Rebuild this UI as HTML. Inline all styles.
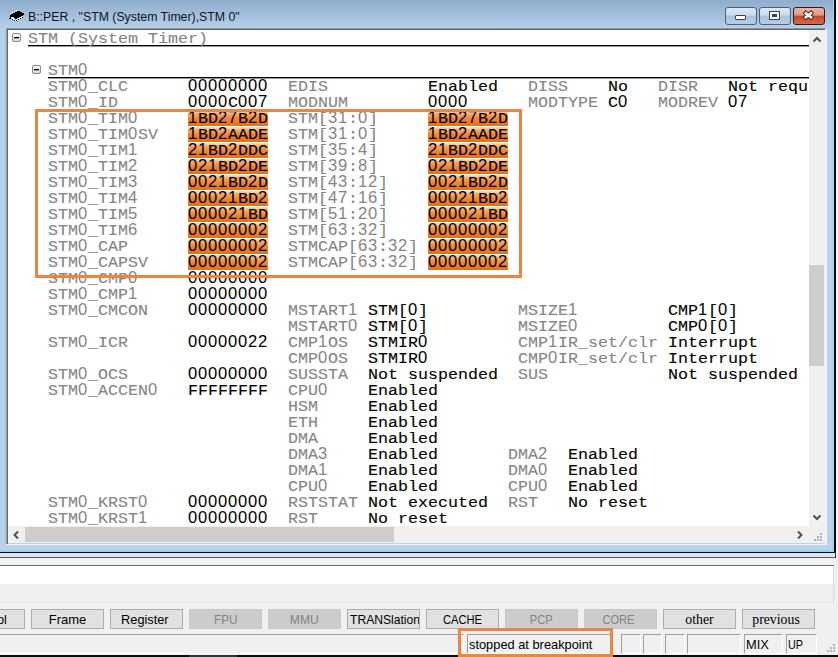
<!DOCTYPE html>
<html><head><meta charset="utf-8">
<style>
*{box-sizing:border-box}
html,body{margin:0;padding:0}
body{width:838px;height:657px;overflow:hidden;position:relative;background:#f7f6f4;font-family:"Liberation Sans",sans-serif}
.a{position:absolute}
#frame{position:absolute;left:0;top:0;width:834px;height:552px;background:#bcd2ea}
#title{position:absolute;left:0;top:0;width:834px;height:29px;background:linear-gradient(#8fadcc,#a7c2de 60%,#b8d1ea)}
#ttxt{position:absolute;left:28px;top:9px;font-size:12.3px;color:#0b1724;white-space:pre;line-height:16px}
#content{position:absolute;left:7px;top:29px;width:802px;height:497px;background:#fff;border-left:1px solid #5f6670;border-top:1px solid #5f6670;overflow:hidden}
#c2{position:absolute;left:-8px;top:-30px;width:838px;height:560px}
.t{position:absolute;font-style:normal;font-family:"Liberation Mono",monospace;font-size:16.664px;line-height:16px;white-space:pre;transform:scaleY(0.874);transform-origin:0 12.43px;-webkit-text-stroke:0.12px currentColor}
.n{color:#858585}
.v{color:#000}
.dg{position:absolute;font-style:normal;font-family:"Liberation Sans",sans-serif;font-size:16.6px;letter-spacing:0.77px;line-height:16px;white-space:pre}
.hb{position:absolute;height:15px;background:linear-gradient(#fcdcbf 0%,#f6a35c 25%,#ef842e 55%,#e0701a 100%)}
.ul{position:absolute;height:1px;background:#000;box-shadow:0 1px 0 #9a9a9a}
.tree{position:absolute;width:9px;height:9px;border:1px solid #8a8a8a;border-radius:2px;background:linear-gradient(#fafafa,#d8d8d8)}
.tree:after{content:"";position:absolute;left:1px;top:3px;width:5px;height:1px;background:#000;box-shadow:0 0.5px 0 #555}
#vsb{position:absolute;left:809px;top:30px;width:16px;height:513px;background:#f0f0f0}
#hsb{position:absolute;left:8px;top:526px;width:801px;height:17px;background:#f0f0f0}
#vthumb{position:absolute;left:809px;top:265px;width:15px;height:101px;background:#cdcdcd}
#hthumb{position:absolute;left:25px;top:527px;width:369px;height:15px;background:#cdcdcd}
.orange{position:absolute;border:3px solid #ea8544}
.btn{position:absolute;top:609px;width:73px;height:20px;border:1px solid #adadad;background:#e1e1e1;font-size:12.8px;line-height:19px;text-align:center;color:#000;white-space:pre;overflow:hidden}
.dis{background:#cccccc;border-color:#c8c8c8;color:#838383}
.ser{font-family:"Liberation Serif",serif;font-size:13.8px}
.cell{position:absolute;top:634px;height:20px;border-left:1px solid #a0a0a0;border-top:1px solid #a0a0a0;border-right:1px solid #fff;border-bottom:1px solid #fff;font-size:12.84px;line-height:19px;white-space:pre;padding-left:1px}
</style></head><body>
<div id="frame"></div>
<div id="title"></div>
<div class="a" style="left:0;top:29px;width:7px;height:516px;background:linear-gradient(to right,#b3cfec 0,#b6cfea 2px,#bcd0e6 4px,#c4d2e0 5px,#9ba7b3 6px,#9ba7b3 7px)"></div>
<!-- chip icon -->
<svg class="a" style="left:0;top:0" width="30" height="28" shape-rendering="crispEdges"><g fill="#fff" opacity="0.85"><rect x="10" y="13" width="1" height="1"/><rect x="12" y="12" width="1" height="1"/><rect x="14" y="11" width="1" height="1"/><rect x="16" y="10" width="1" height="1"/><rect x="11" y="17" width="1" height="1"/><rect x="12" y="17" width="1" height="1"/><rect x="12" y="18" width="1" height="1"/><rect x="13" y="18" width="1" height="1"/><rect x="13" y="19" width="1" height="1"/><rect x="15" y="20" width="1" height="1"/><rect x="17" y="19" width="1" height="1"/><rect x="19" y="18" width="1" height="1"/><rect x="21" y="17" width="1" height="1"/><rect x="14" y="19" width="1" height="1"/><rect x="16" y="19" width="1" height="1"/><rect x="18" y="18" width="1" height="1"/><rect x="20" y="17" width="1" height="1"/><rect x="22" y="16" width="1" height="1"/></g><g fill="#000"><rect x="17" y="11" width="3" height="1"/><rect x="15" y="12" width="7" height="1"/><rect x="13" y="13" width="11" height="1"/><rect x="11" y="14" width="13" height="1"/><rect x="10" y="15" width="13" height="1"/><rect x="10" y="16" width="11" height="1"/><rect x="10" y="17" width="1" height="1"/><rect x="14" y="17" width="5" height="1"/><rect x="9" y="18" width="2" height="1"/><rect x="15" y="18" width="2" height="1"/><rect x="12" y="19" width="1" height="1"/><rect x="14" y="20" width="1" height="1"/><rect x="16" y="20" width="1" height="1"/><rect x="18" y="19" width="1" height="1"/><rect x="20" y="18" width="1" height="1"/><rect x="22" y="17" width="1" height="1"/></g></svg>
<div id="ttxt">B::PER , "STM (System Timer),STM 0"</div>
<!-- window buttons -->
<div class="a" style="left:725px;top:7px;width:32px;height:18px;border:1px solid #4d6078;border-radius:3px;background:linear-gradient(#dce8f4 0%,#c8dbee 45%,#a9c2dc 50%,#b6cde6 100%)"></div>
<div class="a" style="left:735px;top:15px;width:11px;height:5px;border:1px solid #3a4450;border-radius:1px;background:#fff"></div>
<div class="a" style="left:759px;top:7px;width:32px;height:18px;border:1px solid #4d6078;border-radius:3px;background:linear-gradient(#dce8f4 0%,#c8dbee 45%,#a9c2dc 50%,#b6cde6 100%)"></div>
<div class="a" style="left:769px;top:11px;width:11px;height:9px;border:1px solid #3a4450;background:#fff"></div>
<div class="a" style="left:772px;top:14px;width:5px;height:3px;background:#3a4450"></div>
<div class="a" style="left:793px;top:7px;width:32px;height:18px;border:1px solid #2f1a1a;border-radius:3px;background:linear-gradient(#ecb4a0 0%,#e39a80 45%,#c7452b 50%,#d5694e 100%)"></div>
<svg class="a" style="left:800px;top:8px" width="18" height="16" viewBox="0 0 18 16">
<path d="M5.8 5.2 L11 9.2 M11 5.2 L5.8 9.2" stroke="#43201a" stroke-width="4.4" stroke-linecap="square"/>
<path d="M5.8 5.2 L11 9.2 M11 5.2 L5.8 9.2" stroke="#fff" stroke-width="2.6" stroke-linecap="square"/>
</svg>
<div class="a" style="left:6px;top:28px;width:819px;height:1px;background:#8d969f"></div>
<div class="a" style="left:7px;top:29px;width:818px;height:1px;background:#5f6670"></div>
<!-- frame right/bottom lines -->
<div class="a" style="left:832px;top:20px;width:1px;height:532px;background:#aad3ee"></div>
<div class="a" style="left:833px;top:0;width:1px;height:552px;background:#96d8f2"></div>
<div class="a" style="left:834px;top:0;width:2px;height:553px;background:#0a0a0a"></div>
<div class="a" style="left:0;top:550px;width:834px;height:2px;background:#8ad8ee"></div>
<div class="a" style="left:0;top:552px;width:836px;height:1px;background:#0a0a0a"></div>
<!-- light lines around scrollbars -->
<div class="a" style="left:825px;top:29px;width:2px;height:516px;background:#eef3fa"></div>
<div class="a" style="left:6px;top:544px;width:821px;height:1px;background:#eef4fb"></div>
<div class="a" style="left:7px;top:526px;width:1px;height:18px;background:#5f6670"></div>

<div id="content"><div id="c2">
<div class="ul" style="left:28px;top:45px;width:781px"></div>
<div class="ul" style="left:48px;top:77px;width:761px"></div>
<div class="tree" style="left:12px;top:33px"></div>
<div class="tree" style="left:32px;top:65px"></div>
<i class="t n" style="left:28px;top:31px">STM (System Timer)</i>
<i class="t n" style="left:48px;top:63px">STM</i>
<i class="dg n" style="left:78px;top:62px">0</i>
<u class="hb" style="left:188px;top:111px;width:80px"></u>
<u class="hb" style="left:428px;top:111px;width:80px"></u>
<u class="hb" style="left:188px;top:127px;width:80px"></u>
<u class="hb" style="left:428px;top:127px;width:80px"></u>
<u class="hb" style="left:188px;top:143px;width:80px"></u>
<u class="hb" style="left:428px;top:143px;width:80px"></u>
<u class="hb" style="left:188px;top:159px;width:80px"></u>
<u class="hb" style="left:428px;top:159px;width:80px"></u>
<u class="hb" style="left:188px;top:175px;width:80px"></u>
<u class="hb" style="left:428px;top:175px;width:80px"></u>
<u class="hb" style="left:188px;top:191px;width:80px"></u>
<u class="hb" style="left:428px;top:191px;width:80px"></u>
<u class="hb" style="left:188px;top:207px;width:80px"></u>
<u class="hb" style="left:428px;top:207px;width:80px"></u>
<u class="hb" style="left:188px;top:223px;width:80px"></u>
<u class="hb" style="left:428px;top:223px;width:80px"></u>
<u class="hb" style="left:188px;top:239px;width:80px"></u>
<u class="hb" style="left:428px;top:239px;width:80px"></u>
<u class="hb" style="left:188px;top:255px;width:80px"></u>
<u class="hb" style="left:428px;top:255px;width:80px"></u>
<i class="t n" style="left:48px;top:79px">STM _CLC</i>
<i class="dg n" style="left:78px;top:78px">0</i>
<i class="dg v" style="left:188px;top:78px">00000000</i>
<i class="t n" style="left:288px;top:79px">EDIS</i>
<i class="t v" style="left:428px;top:79px">Enabled</i>
<i class="t n" style="left:528px;top:79px">DISS</i>
<i class="t v" style="left:608px;top:79px">No</i>
<i class="t n" style="left:658px;top:79px">DISR</i>
<i class="t v" style="left:728px;top:79px">Not requ</i>
<i class="t n" style="left:48px;top:95px">STM _ID</i>
<i class="dg n" style="left:78px;top:94px">0</i>
<i class="t v" style="left:188px;top:95px">    C</i>
<i class="dg v" style="left:188px;top:94px">0000</i>
<i class="dg v" style="left:238px;top:94px">007</i>
<i class="t n" style="left:288px;top:95px">MODNUM</i>
<i class="dg v" style="left:428px;top:94px">0000</i>
<i class="t n" style="left:528px;top:95px">MODTYPE</i>
<i class="t v" style="left:608px;top:95px">C</i>
<i class="dg v" style="left:618px;top:94px">0</i>
<i class="t n" style="left:658px;top:95px">MODREV</i>
<i class="dg v" style="left:728px;top:94px">07</i>
<i class="t n" style="left:48px;top:111px">STM _TIM</i>
<i class="dg n" style="left:78px;top:110px">0</i>
<i class="dg n" style="left:128px;top:110px">0</i>
<i class="t v" style="left:188px;top:111px"> BD  B D</i>
<i class="dg v" style="left:188px;top:110px">1</i>
<i class="dg v" style="left:218px;top:110px">27</i>
<i class="dg v" style="left:248px;top:110px">2</i>
<i class="t n" style="left:288px;top:111px">STM[  : ]</i>
<i class="dg n" style="left:328px;top:110px">31</i>
<i class="dg n" style="left:358px;top:110px">0</i>
<i class="t v" style="left:428px;top:111px"> BD  B D</i>
<i class="dg v" style="left:428px;top:110px">1</i>
<i class="dg v" style="left:458px;top:110px">27</i>
<i class="dg v" style="left:488px;top:110px">2</i>
<i class="t n" style="left:48px;top:127px">STM _TIM SV</i>
<i class="dg n" style="left:78px;top:126px">0</i>
<i class="dg n" style="left:128px;top:126px">0</i>
<i class="t v" style="left:188px;top:127px"> BD AADE</i>
<i class="dg v" style="left:188px;top:126px">1</i>
<i class="dg v" style="left:218px;top:126px">2</i>
<i class="t n" style="left:288px;top:127px">STM[  : ]</i>
<i class="dg n" style="left:328px;top:126px">31</i>
<i class="dg n" style="left:358px;top:126px">0</i>
<i class="t v" style="left:428px;top:127px"> BD AADE</i>
<i class="dg v" style="left:428px;top:126px">1</i>
<i class="dg v" style="left:458px;top:126px">2</i>
<i class="t n" style="left:48px;top:143px">STM _TIM</i>
<i class="dg n" style="left:78px;top:142px">0</i>
<i class="dg n" style="left:128px;top:142px">1</i>
<i class="t v" style="left:188px;top:143px">  BD DDC</i>
<i class="dg v" style="left:188px;top:142px">21</i>
<i class="dg v" style="left:228px;top:142px">2</i>
<i class="t n" style="left:288px;top:143px">STM[  : ]</i>
<i class="dg n" style="left:328px;top:142px">35</i>
<i class="dg n" style="left:358px;top:142px">4</i>
<i class="t v" style="left:428px;top:143px">  BD DDC</i>
<i class="dg v" style="left:428px;top:142px">21</i>
<i class="dg v" style="left:468px;top:142px">2</i>
<i class="t n" style="left:48px;top:159px">STM _TIM</i>
<i class="dg n" style="left:78px;top:158px">0</i>
<i class="dg n" style="left:128px;top:158px">2</i>
<i class="t v" style="left:188px;top:159px">   BD DE</i>
<i class="dg v" style="left:188px;top:158px">021</i>
<i class="dg v" style="left:238px;top:158px">2</i>
<i class="t n" style="left:288px;top:159px">STM[  : ]</i>
<i class="dg n" style="left:328px;top:158px">39</i>
<i class="dg n" style="left:358px;top:158px">8</i>
<i class="t v" style="left:428px;top:159px">   BD DE</i>
<i class="dg v" style="left:428px;top:158px">021</i>
<i class="dg v" style="left:478px;top:158px">2</i>
<i class="t n" style="left:48px;top:175px">STM _TIM</i>
<i class="dg n" style="left:78px;top:174px">0</i>
<i class="dg n" style="left:128px;top:174px">3</i>
<i class="t v" style="left:188px;top:175px">    BD D</i>
<i class="dg v" style="left:188px;top:174px">0021</i>
<i class="dg v" style="left:248px;top:174px">2</i>
<i class="t n" style="left:288px;top:175px">STM[  :  ]</i>
<i class="dg n" style="left:328px;top:174px">43</i>
<i class="dg n" style="left:358px;top:174px">12</i>
<i class="t v" style="left:428px;top:175px">    BD D</i>
<i class="dg v" style="left:428px;top:174px">0021</i>
<i class="dg v" style="left:488px;top:174px">2</i>
<i class="t n" style="left:48px;top:191px">STM _TIM</i>
<i class="dg n" style="left:78px;top:190px">0</i>
<i class="dg n" style="left:128px;top:190px">4</i>
<i class="t v" style="left:188px;top:191px">     BD</i>
<i class="dg v" style="left:188px;top:190px">00021</i>
<i class="dg v" style="left:258px;top:190px">2</i>
<i class="t n" style="left:288px;top:191px">STM[  :  ]</i>
<i class="dg n" style="left:328px;top:190px">47</i>
<i class="dg n" style="left:358px;top:190px">16</i>
<i class="t v" style="left:428px;top:191px">     BD</i>
<i class="dg v" style="left:428px;top:190px">00021</i>
<i class="dg v" style="left:498px;top:190px">2</i>
<i class="t n" style="left:48px;top:207px">STM _TIM</i>
<i class="dg n" style="left:78px;top:206px">0</i>
<i class="dg n" style="left:128px;top:206px">5</i>
<i class="t v" style="left:188px;top:207px">      BD</i>
<i class="dg v" style="left:188px;top:206px">000021</i>
<i class="t n" style="left:288px;top:207px">STM[  :  ]</i>
<i class="dg n" style="left:328px;top:206px">51</i>
<i class="dg n" style="left:358px;top:206px">20</i>
<i class="t v" style="left:428px;top:207px">      BD</i>
<i class="dg v" style="left:428px;top:206px">000021</i>
<i class="t n" style="left:48px;top:223px">STM _TIM</i>
<i class="dg n" style="left:78px;top:222px">0</i>
<i class="dg n" style="left:128px;top:222px">6</i>
<i class="dg v" style="left:188px;top:222px">00000002</i>
<i class="t n" style="left:288px;top:223px">STM[  :  ]</i>
<i class="dg n" style="left:328px;top:222px">63</i>
<i class="dg n" style="left:358px;top:222px">32</i>
<i class="dg v" style="left:428px;top:222px">00000002</i>
<i class="t n" style="left:48px;top:239px">STM _CAP</i>
<i class="dg n" style="left:78px;top:238px">0</i>
<i class="dg v" style="left:188px;top:238px">00000002</i>
<i class="t n" style="left:288px;top:239px">STMCAP[  :  ]</i>
<i class="dg n" style="left:358px;top:238px">63</i>
<i class="dg n" style="left:388px;top:238px">32</i>
<i class="dg v" style="left:428px;top:238px">00000002</i>
<i class="t n" style="left:48px;top:255px">STM _CAPSV</i>
<i class="dg n" style="left:78px;top:254px">0</i>
<i class="dg v" style="left:188px;top:254px">00000002</i>
<i class="t n" style="left:288px;top:255px">STMCAP[  :  ]</i>
<i class="dg n" style="left:358px;top:254px">63</i>
<i class="dg n" style="left:388px;top:254px">32</i>
<i class="dg v" style="left:428px;top:254px">00000002</i>
<i class="t n" style="left:48px;top:271px">STM _CMP</i>
<i class="dg n" style="left:78px;top:270px">0</i>
<i class="dg n" style="left:128px;top:270px">0</i>
<i class="dg v" style="left:188px;top:270px">00000000</i>
<i class="t n" style="left:48px;top:287px">STM _CMP</i>
<i class="dg n" style="left:78px;top:286px">0</i>
<i class="dg n" style="left:128px;top:286px">1</i>
<i class="dg v" style="left:188px;top:286px">00000000</i>
<i class="t n" style="left:48px;top:303px">STM _CMCON</i>
<i class="dg n" style="left:78px;top:302px">0</i>
<i class="dg v" style="left:188px;top:302px">00000000</i>
<i class="t n" style="left:288px;top:303px">MSTART</i>
<i class="dg n" style="left:348px;top:302px">1</i>
<i class="t v" style="left:368px;top:303px">STM[ ]</i>
<i class="dg v" style="left:408px;top:302px">0</i>
<i class="t n" style="left:518px;top:303px">MSIZE</i>
<i class="dg n" style="left:568px;top:302px">1</i>
<i class="t v" style="left:668px;top:303px">CMP [ ]</i>
<i class="dg v" style="left:698px;top:302px">1</i>
<i class="dg v" style="left:718px;top:302px">0</i>
<i class="t n" style="left:288px;top:319px">MSTART</i>
<i class="dg n" style="left:348px;top:318px">0</i>
<i class="t v" style="left:368px;top:319px">STM[ ]</i>
<i class="dg v" style="left:408px;top:318px">0</i>
<i class="t n" style="left:518px;top:319px">MSIZE</i>
<i class="dg n" style="left:568px;top:318px">0</i>
<i class="t v" style="left:668px;top:319px">CMP [ ]</i>
<i class="dg v" style="left:698px;top:318px">0</i>
<i class="dg v" style="left:718px;top:318px">0</i>
<i class="t n" style="left:48px;top:335px">STM _ICR</i>
<i class="dg n" style="left:78px;top:334px">0</i>
<i class="dg v" style="left:188px;top:334px">00000022</i>
<i class="t n" style="left:288px;top:335px">CMP OS</i>
<i class="dg n" style="left:318px;top:334px">1</i>
<i class="t v" style="left:368px;top:335px">STMIR</i>
<i class="dg v" style="left:418px;top:334px">0</i>
<i class="t n" style="left:518px;top:335px">CMP IR_set/clr</i>
<i class="dg n" style="left:548px;top:334px">1</i>
<i class="t v" style="left:668px;top:335px">Interrupt</i>
<i class="t n" style="left:288px;top:351px">CMP OS</i>
<i class="dg n" style="left:318px;top:350px">0</i>
<i class="t v" style="left:368px;top:351px">STMIR</i>
<i class="dg v" style="left:418px;top:350px">0</i>
<i class="t n" style="left:518px;top:351px">CMP IR_set/clr</i>
<i class="dg n" style="left:548px;top:350px">0</i>
<i class="t v" style="left:668px;top:351px">Interrupt</i>
<i class="t n" style="left:48px;top:367px">STM _OCS</i>
<i class="dg n" style="left:78px;top:366px">0</i>
<i class="dg v" style="left:188px;top:366px">00000000</i>
<i class="t n" style="left:288px;top:367px">SUSSTA</i>
<i class="t v" style="left:368px;top:367px">Not suspended</i>
<i class="t n" style="left:518px;top:367px">SUS</i>
<i class="t v" style="left:668px;top:367px">Not suspended</i>
<i class="t n" style="left:48px;top:383px">STM _ACCEN</i>
<i class="dg n" style="left:78px;top:382px">0</i>
<i class="dg n" style="left:148px;top:382px">0</i>
<i class="t v" style="left:188px;top:383px">FFFFFFFF</i>
<i class="t n" style="left:288px;top:383px">CPU</i>
<i class="dg n" style="left:318px;top:382px">0</i>
<i class="t v" style="left:368px;top:383px">Enabled</i>
<i class="t n" style="left:288px;top:399px">HSM</i>
<i class="t v" style="left:368px;top:399px">Enabled</i>
<i class="t n" style="left:288px;top:415px">ETH</i>
<i class="t v" style="left:368px;top:415px">Enabled</i>
<i class="t n" style="left:288px;top:431px">DMA</i>
<i class="t v" style="left:368px;top:431px">Enabled</i>
<i class="t n" style="left:288px;top:447px">DMA</i>
<i class="dg n" style="left:318px;top:446px">3</i>
<i class="t v" style="left:368px;top:447px">Enabled</i>
<i class="t n" style="left:508px;top:447px">DMA</i>
<i class="dg n" style="left:538px;top:446px">2</i>
<i class="t v" style="left:568px;top:447px">Enabled</i>
<i class="t n" style="left:288px;top:463px">DMA</i>
<i class="dg n" style="left:318px;top:462px">1</i>
<i class="t v" style="left:368px;top:463px">Enabled</i>
<i class="t n" style="left:508px;top:463px">DMA</i>
<i class="dg n" style="left:538px;top:462px">0</i>
<i class="t v" style="left:568px;top:463px">Enabled</i>
<i class="t n" style="left:288px;top:479px">CPU</i>
<i class="dg n" style="left:318px;top:478px">0</i>
<i class="t v" style="left:368px;top:479px">Enabled</i>
<i class="t n" style="left:508px;top:479px">CPU</i>
<i class="dg n" style="left:538px;top:478px">0</i>
<i class="t v" style="left:568px;top:479px">Enabled</i>
<i class="t n" style="left:48px;top:495px">STM _KRST</i>
<i class="dg n" style="left:78px;top:494px">0</i>
<i class="dg n" style="left:138px;top:494px">0</i>
<i class="dg v" style="left:188px;top:494px">00000000</i>
<i class="t n" style="left:288px;top:495px">RSTSTAT</i>
<i class="t v" style="left:368px;top:495px">Not executed</i>
<i class="t n" style="left:508px;top:495px">RST</i>
<i class="t v" style="left:568px;top:495px">No reset</i>
<i class="t n" style="left:48px;top:511px">STM _KRST</i>
<i class="dg n" style="left:78px;top:510px">0</i>
<i class="dg n" style="left:138px;top:510px">1</i>
<i class="dg v" style="left:188px;top:510px">00000000</i>
<i class="t n" style="left:288px;top:511px">RST</i>
<i class="t v" style="left:368px;top:511px">No reset</i>
</div></div>
<div class="orange" style="left:35px;top:109px;width:487px;height:169px"></div>

<div id="vsb"></div>
<div id="vthumb"></div>
<div id="hsb"></div>
<div id="hthumb"></div>
<div class="a" style="left:809px;top:526px;width:16px;height:17px;background:#f0f0f0"></div>
<!-- arrows -->
<svg class="a" style="left:812px;top:35px" width="10" height="8"><path d="M1.5 6.5 L5 3 L8.5 6.5" stroke="#505050" stroke-width="2" fill="none"/></svg>
<svg class="a" style="left:812px;top:514px" width="10" height="8"><path d="M1.5 1.5 L5 5 L8.5 1.5" stroke="#505050" stroke-width="2" fill="none"/></svg>
<svg class="a" style="left:12px;top:530px" width="8" height="10"><path d="M6 1.5 L2.5 5 L6 8.5" stroke="#505050" stroke-width="2" fill="none"/></svg>
<svg class="a" style="left:796px;top:530px" width="8" height="10"><path d="M2 1.5 L5.5 5 L2 8.5" stroke="#505050" stroke-width="2" fill="none"/></svg>
<svg class="a" style="left:814px;top:533px" width="10" height="10"><g fill="#b0b0b0"><rect x="6" y="0" width="2" height="2"/><rect x="3" y="3" width="2" height="2"/><rect x="6" y="3" width="2" height="2"/><rect x="0" y="6" width="2" height="2"/><rect x="3" y="6" width="2" height="2"/><rect x="6" y="6" width="2" height="2"/></g></svg>

<!-- lower area -->
<div class="a" style="left:0;top:553px;width:838px;height:104px;background:#f0f0f0"></div>
<div class="a" style="left:0;top:553px;width:836px;height:4px;background:#dce6f2"></div>
<div class="a" style="left:0;top:557px;width:836px;height:1px;background:#5e5555"></div>
<div class="a" style="left:835px;top:552px;width:1px;height:6px;background:#333"></div>
<div class="a" style="left:0;top:565px;width:834px;height:1px;background:#6e6e6e"></div>
<div class="a" style="left:0;top:566px;width:833px;height:18px;background:#fff"></div>
<div class="a" style="left:0;top:602px;width:834px;height:1px;background:#e2e2e2"></div>
<div class="a" style="left:0;top:603px;width:834px;height:1px;background:#fbfbfb"></div>
<div class="a" style="left:833px;top:566px;width:1px;height:38px;background:#dedede"></div>
<div class="btn" style="left:-48px"><span style="position:absolute;left:44px;top:0">ol</span></div>
<div class="btn" style="left:31px"><span style="display:inline-block;position:relative;left:0px;transform:scaleX(1.014)">Frame</span></div>
<div class="btn" style="left:110px"><span style="display:inline-block;position:relative;left:-2px;transform:scaleX(0.996)">Register</span></div>
<div class="btn dis" style="left:189px"><span style="display:inline-block;position:relative;left:0px;transform:scaleX(0.913)">FPU</span></div>
<div class="btn dis" style="left:268px"><span style="display:inline-block;position:relative;left:0px;transform:scaleX(0.944)">MMU</span></div>
<div class="btn" style="left:347px"><span style="display:inline-block;position:relative;left:0px;transform:scaleX(0.945)">TRANSlation</span></div>
<div class="btn" style="left:426px"><span style="display:inline-block;position:relative;left:0px;transform:scaleX(0.870)">CACHE</span></div>
<div class="btn dis" style="left:505px"><span style="display:inline-block;position:relative;left:0px;transform:scaleX(0.866)">PCP</span></div>
<div class="btn dis" style="left:584px"><span style="display:inline-block;position:relative;left:-2px;transform:scaleX(0.864)">CORE</span></div>
<div class="btn ser" style="left:663px"><span style="position:relative;left:0.0px">other</span></div>
<div class="btn ser" style="left:742px"><span style="position:relative;left:-2.5px">previous</span></div>
<div class="cell" style="left:-10px;width:474px"></div>
<div class="cell" style="left:467px;width:144px">stopped at breakpoint</div>
<div class="cell" style="left:621px;width:20px"></div>
<div class="cell" style="left:643px;width:19px"></div>
<div class="cell" style="left:665px;width:20px"></div>
<div class="cell" style="left:687px;width:54px"></div>
<div class="cell" style="left:744px;width:39px">MIX</div>
<div class="cell" style="left:786px;width:31px"><span style="display:inline-block;transform:scaleX(0.84);transform-origin:0 0">UP</span></div>
<svg class="a" style="left:827px;top:644px" width="10" height="10"><g fill="#b8b8b8"><rect x="6" y="0" width="2" height="2"/><rect x="3" y="3" width="2" height="2"/><rect x="6" y="3" width="2" height="2"/><rect x="0" y="6" width="2" height="2"/><rect x="3" y="6" width="2" height="2"/><rect x="6" y="6" width="2" height="2"/></g></svg>
<div class="a" style="left:0;top:655px;width:838px;height:2px;background:#0c0c10"></div>
<div class="a" style="left:189px;top:655px;width:48px;height:2px;background:#33343c"></div>
<div class="orange" style="left:458px;top:628px;width:155px;height:29px"></div>
</body></html>
